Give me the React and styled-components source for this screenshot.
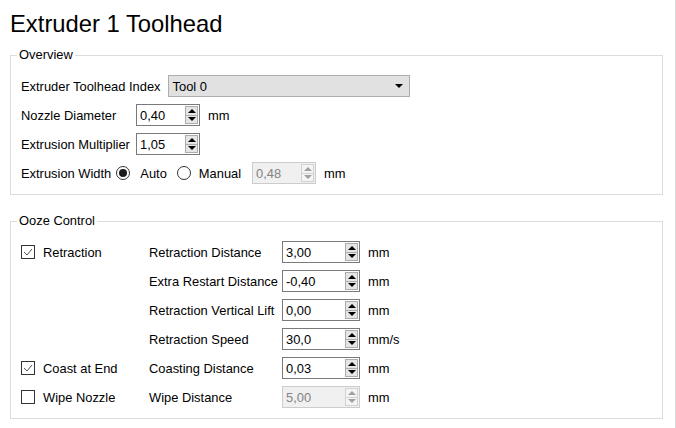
import React from "react";
import styled, { createGlobalStyle } from "styled-components";

const GlobalStyle = createGlobalStyle`
  html, body {
    margin: 0;
    background: #ffffff;
  }
  body {
    font-family: "Liberation Sans", Arial, sans-serif;
    font-size: 12.9px;
    color: #000000;
  }
`;

const Page = styled.div`
  width: 676px;
  height: 428px;
  box-sizing: border-box;
  padding: 0 12px 0 10px;
  border-right: 1px solid #dcdcdc;
  overflow: hidden;
`;

const Title = styled.h1`
  margin: 8px 0 0 0;
  font-weight: normal;
  font-size: 23.8px;
  line-height: 32px;
`;

const Group = styled.fieldset`
  margin: ${(p) => p.$top}px 0 0 0;
  padding: ${(p) => p.$pad};
  border: 1px solid #dcdcdc;
  min-inline-size: auto;
`;

const Legend = styled.legend`
  margin-left: -4px;
  padding: 0 2px;
  line-height: 14px;
`;

const Rows = styled.div`
  display: flex;
  flex-direction: column;
  gap: 7px;
`;

const Row = styled.div`
  display: flex;
  align-items: center;
  height: 22px;
`;

const Label = styled.span`
  width: ${(p) => (p.$width ? `${p.$width}px` : "auto")};
  margin-right: ${(p) => (p.$gap !== undefined ? p.$gap : 7)}px;
  white-space: nowrap;
`;

const Combo = styled.div`
  width: 242px;
  height: 22px;
  box-sizing: border-box;
  display: flex;
  align-items: center;
  justify-content: space-between;
  padding: 0 6px 0 4px;
  background: #e1e1e1;
  border: 1px solid #adadad;
`;

const Arrow = styled.span`
  width: 0;
  height: 0;
  border-left: 4px solid transparent;
  border-right: 4px solid transparent;
  border-top: 4px solid #000000;
`;

const Spin = styled.div`
  width: ${(p) => p.$width}px;
  height: 22px;
  box-sizing: border-box;
  display: flex;
  align-items: center;
  justify-content: space-between;
  padding: 0 1px 0 3px;
  background: ${(p) => (p.$disabled ? "#f0f0f0" : "#ffffff")};
  border: 1px solid ${(p) => (p.$disabled ? "#cccccc" : "#7a7a7a")};
  color: ${(p) => (p.$disabled ? "#838383" : "#000000")};
`;

const SpinButtons = styled.div`
  display: flex;
  flex-direction: column;
  width: 13px;
  height: 18px;
`;

const SpinButton = styled.div`
  flex: 1;
  display: flex;
  align-items: center;
  justify-content: center;
  background: ${(p) => (p.$disabled ? "#f4f4f4" : "#e5e5e5")};
  border: 1px solid ${(p) => (p.$disabled ? "#d2d2d2" : "#acacac")};
  & + & {
    border-top: none;
  }
`;

const Tri = styled.span`
  width: 0;
  height: 0;
  border-left: 4px solid transparent;
  border-right: 4px solid transparent;
  ${(p) => (p.$up ? "border-bottom" : "border-top")}: 4px solid
    ${(p) => (p.$disabled ? "#a0a0a0" : "#000000")};
`;

const Unit = styled.span`
  margin-left: 8px;
`;

const Radio = styled.span`
  width: 14px;
  height: 14px;
  box-sizing: border-box;
  border-radius: 50%;
  border: 1px solid #333333;
  display: flex;
  align-items: center;
  justify-content: center;
  margin: 0 ${(p) => p.$right}px 0 ${(p) => p.$left}px;
  &::after {
    content: "";
    width: 8px;
    height: 8px;
    border-radius: 50%;
    background: ${(p) => (p.$checked ? "#1a1a1a" : "transparent")};
  }
`;

const OozeGrid = styled.div`
  display: grid;
  grid-template-columns: 128px 133px 78px auto;
  grid-auto-rows: 22px;
  row-gap: 7px;
  align-items: center;
`;

const CheckCell = styled.div`
  display: flex;
  align-items: center;
  gap: 8px;
`;

const Box = styled.span`
  width: 14px;
  height: 14px;
  box-sizing: border-box;
  border: 1px solid #333333;
  display: flex;
  align-items: center;
  justify-content: center;
`;

const Check = ({ checked, label }) => (
  <CheckCell>
    <Box>
      {checked && (
        <svg width="10" height="8" viewBox="0 0 10 8">
          <path d="M1 4 L4 7 L9 1" fill="none" stroke="#555" strokeWidth="1" />
        </svg>
      )}
    </Box>
    {label}
  </CheckCell>
);

const SpinBox = ({ value, width = 78, disabled }) => (
  <Spin $width={width} $disabled={disabled}>
    {value}
    <SpinButtons>
      <SpinButton $disabled={disabled}>
        <Tri $up $disabled={disabled} />
      </SpinButton>
      <SpinButton $disabled={disabled}>
        <Tri $disabled={disabled} />
      </SpinButton>
    </SpinButtons>
  </Spin>
);

const oozeRows = [
  { check: "Retraction", checked: true, label: "Retraction Distance", value: "3,00", unit: "mm" },
  { label: "Extra Restart Distance", value: "-0,40", unit: "mm" },
  { label: "Retraction Vertical Lift", value: "0,00", unit: "mm" },
  { label: "Retraction Speed", value: "30,0", unit: "mm/s" },
  { check: "Coast at End", checked: true, label: "Coasting Distance", value: "0,03", unit: "mm" },
  { check: "Wipe Nozzle", checked: false, label: "Wipe Distance", value: "5,00", unit: "mm", disabled: true },
];

const App = () => {
  return (
    <Page>
      <GlobalStyle />
      <Title>Extruder 1 Toolhead</Title>

      <Group $top={8} $pad="13px 10px 10px 10px">
        <Legend>Overview</Legend>
        <Rows>
          <Row>
            <Label>Extruder Toolhead Index</Label>
            <Combo>
              Tool 0
              <Arrow />
            </Combo>
          </Row>
          <Row>
            <Label $width={108}>Nozzle Diameter</Label>
            <SpinBox value="0,40" width={64} />
            <Unit>mm</Unit>
          </Row>
          <Row>
            <Label $width={108}>Extrusion Multiplier</Label>
            <SpinBox value="1,05" width={64} />
          </Row>
          <Row>
            <Label $gap={0}>Extrusion Width</Label>
            <Radio $checked $left={5} $right={10} />
            <Label $gap={0}>Auto</Label>
            <Radio $left={10} $right={8} />
            <Label $gap={11}>Manual</Label>
            <SpinBox value="0,48" width={64} disabled />
            <Unit>mm</Unit>
          </Row>
        </Rows>
      </Group>

      <Group $top={19} $pad="13px 10px 10px 10px">
        <Legend>Ooze Control</Legend>
        <OozeGrid>
          {oozeRows.map((r) => (
            <React.Fragment key={r.label}>
              {r.check ? <Check checked={r.checked} label={r.check} /> : <span />}
              <Label $gap={0}>{r.label}</Label>
              <SpinBox value={r.value} disabled={r.disabled} />
              <Unit>{r.unit}</Unit>
            </React.Fragment>
          ))}
        </OozeGrid>
      </Group>
    </Page>
  );
};

export default App;
